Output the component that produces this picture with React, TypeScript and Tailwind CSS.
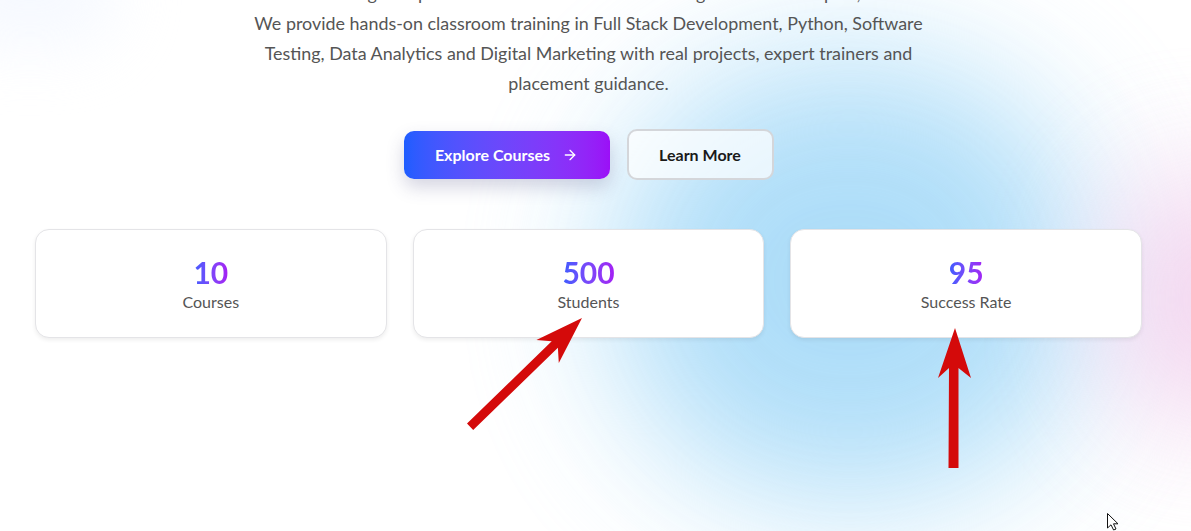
import { ArrowRight } from 'lucide-react'

const STATS = [
  { value: '10', label: 'Courses' },
  { value: '500', label: 'Students' },
  { value: '95', label: 'Success Rate' },
]

function Annotations() {
  return (
    <svg className="pointer-events-none absolute inset-0 z-20" width="1191" height="531" viewBox="0 0 1191 531">
      {/* arrow pointing at Students */}
      <polygon
        fill="#d40a0a"
        points="582,318 558.8,363 557.9,347.7 473.2,429.9 467,423.5 551.7,341.3 536.4,340"
      />
      {/* arrow pointing at Success Rate */}
      <polygon
        fill="#d40a0a"
        points="955,328 971,378 958.5,368 958.5,468 948.5,468 949,368 938,378"
      />
      {/* mouse pointer */}
      <path
        d="M1107.5,513.5 L1107.5,528 L1111,524.8 L1113.6,530 L1116,529 L1113.5,523.8 L1118,523.8 Z"
        fill="#fff"
        stroke="#111"
        strokeWidth="1"
        strokeLinejoin="round"
      />
    </svg>
  )
}

export default function App() {
  return (
    <div className="relative h-[531px] w-full overflow-hidden bg-white font-['Lato',sans-serif]">
      {/* soft background blobs */}
      <div className="absolute left-[610px] top-[60px] h-[440px] w-[480px] rounded-full bg-[#a6daf8] opacity-90 blur-[70px]" />
      <div className="absolute left-[1110px] top-[170px] h-[260px] w-[200px] rounded-full bg-[#f1cdec] opacity-80 blur-[60px]" />
      <div className="absolute -left-[60px] -top-[60px] h-[110px] w-[180px] rounded-full bg-[#f3f7ff] opacity-70 blur-[30px]" />

      <div className="relative z-10 pl-[35px] pr-[49px]">
        <p className="mx-auto -mt-[22px] max-w-[680px] text-center text-[17.9px] leading-[30px] text-[#555]">
          World Blazing Computer Institute is a trusted IT training center in Hadapsar, Pune.
          <br />
          We provide hands-on classroom training in Full Stack Development, Python, Software Testing, Data Analytics and
          Digital Marketing with real projects, expert trainers and placement guidance.
        </p>

        <div className="mt-[31px] flex items-center justify-center gap-[17px]">
          <button className="flex h-[48px] w-[206px] items-center justify-center gap-3 rounded-[10px] bg-gradient-to-r from-[#1d5dff] to-[#9b0ff7] text-[16px] font-bold text-white shadow-[0_8px_18px_rgba(60,60,120,0.22)]">
            Explore Courses
            <ArrowRight size={16} strokeWidth={2} />
          </button>
          <button className="h-[51px] w-[147px] rounded-[10px] border-2 border-[#d4d6da] bg-white/70 text-[16px] font-bold text-[#1a1a1a]">
            Learn More
          </button>
        </div>

        <div className="mt-[49px] grid grid-cols-3 gap-[26px]">
          {STATS.map(s => (
            <div
              key={s.label}
              className="flex h-[109px] flex-col items-center justify-center rounded-[14px] border border-[#e4e4e7] bg-white shadow-[0_2px_4px_rgba(0,0,0,0.07)]"
            >
              <span className="inline-block bg-gradient-to-r from-[#3a5cff] to-[#a41cf4] bg-clip-text text-[30px] font-bold leading-[36px] text-transparent">
                {s.value}
              </span>
              <span className="text-[16px] leading-[24px] text-[#555]">{s.label}</span>
            </div>
          ))}
        </div>
      </div>

      <Annotations />
    </div>
  )
}
